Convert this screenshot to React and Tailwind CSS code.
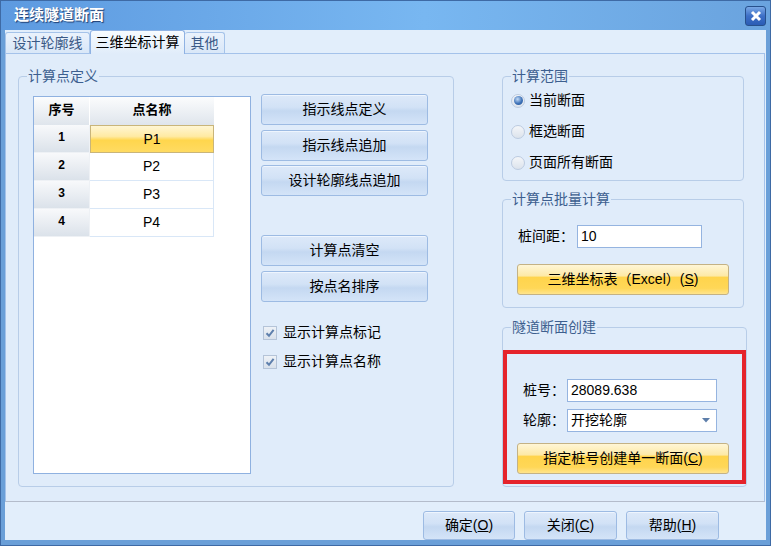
import React from 'react'

const blueBtn =
  'flex items-center justify-center rounded-[3px] border border-[#9dbbe3] bg-[linear-gradient(#dde9f9,#d2e2f6_42%,#c4d8f1_55%,#d4e4f8)] text-[14px] text-black shadow-[inset_0_1px_0_#eef5fe]'
const yellowBtn =
  'flex items-center justify-center rounded-[3px] border border-[#c4b285] bg-[linear-gradient(#fff6d6,#fde9a6_38%,#ffd44c_42%,#ffd757_80%,#ffe48c)] text-[14px] text-black'
const inputBox =
  'flex h-[23px] items-center border border-[#95b4e0] bg-white pl-[3px] text-[14px] text-black'

function Legend({ children }) {
  return (
    <legend className="ml-[8px] px-[1px] text-[14px] leading-[18px] text-[#3d5f8f]">{children}</legend>
  )
}

function Radio({ checked, label }) {
  return (
    <div className="flex h-[31px] items-center">
      <span className="flex h-[14px] w-[14px] items-center justify-center rounded-full border border-[#bccbe0] bg-[linear-gradient(#f4f6f9,#dce3ec)]">
        {checked && (
          <span className="h-[9px] w-[9px] rounded-full bg-[radial-gradient(circle_at_40%_35%,#c4dcf7,#3e72b8_55%,#22508f)]" />
        )}
      </span>
      <span className="ml-[4px] text-[14px] text-black">{label}</span>
    </div>
  )
}

function Check({ label, className }) {
  return (
    <div className={`flex h-[15px] items-center ${className}`}>
      <span className="ml-[2px] flex h-[14px] w-[14px] items-center justify-center border border-[#b5c4d8] bg-[linear-gradient(#eef2f7,#d9e1eb)]">
        <svg width="10" height="10" viewBox="0 0 10 10">
          <path d="M1.5 5.2 L4 7.8 L8.6 1.8" fill="none" stroke="#5f80ad" strokeWidth="2" />
        </svg>
      </span>
      <span className="ml-[6px] text-[14px] text-black">{label}</span>
    </div>
  )
}

export default function App() {
  const rows = ['P1', 'P2', 'P3', 'P4']

  return (
    <div className="flex h-[546px] w-[771px] flex-col border border-[#3e6aa5] bg-[#6a9fd8] font-['Liberation_Sans','Noto_Sans_CJK_SC',sans-serif]">
      {/* Title bar */}
      <div className="flex h-[29px] items-center justify-between bg-[linear-gradient(90deg,#5d9ae0,#78b7f1_55%,#6aa3de)] pl-[13px] pr-[4px]">
        <span className="text-[15px] font-bold text-white [text-shadow:1px_1px_1px_#1f3f73]">连续隧道断面</span>
        <span className="flex h-[20px] w-[21px] items-center justify-center rounded-[3px] border border-[#27508c] bg-[linear-gradient(#79a8e6,#3d6fc6_50%,#2b5cb5)]">
          <svg width="12" height="12" viewBox="0 0 12 12">
            <path d="M2 2 L10 10 M10 2 L2 10" stroke="white" strokeWidth="3" />
          </svg>
        </span>
      </div>

      {/* Client */}
      <div className="mx-[4px] mb-[5px] flex flex-1 flex-col bg-[#e2eefb]">
        {/* Tabs */}
        <div className="relative z-10 flex h-[23px] items-end">
          <div className="flex h-[21px] w-[85px] items-center justify-center rounded-t-[3px] border border-b-0 border-[#a5c3e9] bg-[linear-gradient(#eaf2fc,#d9e7f8)] text-[14px] text-[#3a5986]">
            设计轮廓线
          </div>
          <div className="-mb-px flex h-[24px] w-[95px] items-center justify-center rounded-t-[3px] border border-b-0 border-[#8fb2e3] bg-[linear-gradient(#f7fbff,#e0ecfa)] text-[14px] text-black">
            三维坐标计算
          </div>
          <div className="flex h-[21px] w-[40px] items-center justify-center rounded-t-[3px] border border-b-0 border-l-0 border-[#a5c3e9] bg-[linear-gradient(#eaf2fc,#d9e7f8)] text-[14px] text-[#3a5986]">
            其他
          </div>
        </div>

        {/* Tab panel */}
        <div className="flex h-[449px] w-[760px] border border-[#a4c2ea] border-b-[#b4bccb] bg-[#e0ecfa] pl-[12px] pt-[13px]">
          {/* 计算点定义 */}
          <fieldset className="h-[420px] w-[436px] rounded-[4px] border border-[#b8cde8]">
            <Legend>计算点定义</Legend>
            <div className="flex items-start pl-[14px]">
              {/* Grid */}
              <div className="mt-[11px] h-[378px] w-[218px] border border-[#8fb1e0] bg-white">
                <div className="flex h-[28px]">
                  <div className="flex w-[56px] items-center justify-center border-r border-white bg-[linear-gradient(#fbfcfd,#dfe5ec)] pb-[3px] text-[13px] font-bold text-black">
                    序号
                  </div>
                  <div className="flex w-[124px] items-center justify-center bg-[linear-gradient(#fbfcfd,#dfe5ec)] pb-[3px] text-[13px] font-bold text-black">
                    点名称
                  </div>
                </div>
                {rows.map((r, i) => (
                  <div key={r} className="flex h-[28px]">
                    <div className="flex w-[56px] justify-center border-r border-b border-[#eef1f5] bg-[linear-gradient(#f8f9fb,#dbe2ea)] pt-[5px] text-[12px] font-bold leading-[14px] text-black">
                      {i + 1}
                    </div>
                    {i === 0 ? (
                      <div className="flex w-[124px] items-center justify-center border border-[#c9b57a] bg-[linear-gradient(#fff6d3,#ffeaa3_40%,#ffd64d_55%,#ffdb62)] text-[14px] text-black">
                        {r}
                      </div>
                    ) : (
                      <div className="flex w-[124px] items-center justify-center border-r border-b border-[#d9e7f7] text-[14px] text-black">
                        {r}
                      </div>
                    )}
                  </div>
                ))}
              </div>

              {/* Buttons */}
              <div className="ml-[10px] mt-[9px] flex w-[167px] flex-col">
                <button className={`${blueBtn} h-[31px]`}>指示线点定义</button>
                <button className={`${blueBtn} mt-[5px] h-[31px]`}>指示线点追加</button>
                <button className={`${blueBtn} mt-[4px] h-[31px]`}>设计轮廓线点追加</button>
                <button className={`${blueBtn} mt-[39px] h-[31px]`}>计算点清空</button>
                <button className={`${blueBtn} mt-[5px] h-[31px]`}>按点名排序</button>
                <Check className="mt-[23px]" label="显示计算点标记" />
                <Check className="mt-[14px]" label="显示计算点名称" />
              </div>
            </div>
          </fieldset>

          {/* Right column */}
          <div className="ml-[48px] flex w-[242px] flex-col">
            <fieldset className="h-[114px] rounded-[4px] border border-[#b8cde8]">
              <Legend>计算范围</Legend>
              <div className="pl-[8px]">
                <Radio checked label="当前断面" />
                <Radio label="框选断面" />
                <Radio label="页面所有断面" />
              </div>
            </fieldset>

            <fieldset className="mt-[9px] h-[118px] rounded-[4px] border border-[#b8cde8]">
              <Legend>计算点批量计算</Legend>
              <div className="mt-[17px] flex items-center pl-[15px]">
                <span className="w-[59px] text-[14px] text-black">桩间距：</span>
                <div className={`${inputBox} w-[125px]`}>10</div>
              </div>
              <button className={`${yellowBtn} ml-[14px] mt-[16px] h-[31px] w-[212px]`}>
                三维坐标表（Excel）(<span className="underline">S</span>)
              </button>
            </fieldset>

            <fieldset className="mt-[10px] h-[169px] rounded-[4px] border border-[#b8cde8]">
              <Legend>隧道断面创建</Legend>
              <div className="mt-[14px] h-[134px] w-[243px] border-[4px] border-[#e5232b] pt-[25px]">
                <div className="flex items-center pl-[16px]">
                  <span className="w-[44px] text-[14px] text-black">桩号：</span>
                  <div className={`${inputBox} w-[150px]`}>28089.638</div>
                </div>
                <div className="mt-[7px] flex items-center pl-[16px]">
                  <span className="w-[44px] text-[14px] text-black">轮廓：</span>
                  <div className={`${inputBox} w-[150px] justify-between pr-[6px]`}>
                    <span>开挖轮廓</span>
                    <svg width="8" height="5" viewBox="0 0 8 5">
                      <path d="M0 0 H8 L4 4.5 Z" fill="#5d7eaa" />
                    </svg>
                  </div>
                </div>
                <button className={`${yellowBtn} ml-[10px] mt-[11px] h-[31px] w-[212px]`}>
                  指定桩号创建单一断面(<span className="underline">C</span>)
                </button>
              </div>
            </fieldset>
          </div>
        </div>

        {/* Bottom buttons */}
        <div className="flex flex-1 items-end justify-end gap-[9px] pr-[47px]">
          <button className={`${blueBtn} h-[29px] w-[92px]`}>
            确定(<span className="underline">O</span>)
          </button>
          <button className={`${blueBtn} h-[29px] w-[93px]`}>
            关闭(<span className="underline">C</span>)
          </button>
          <button className={`${blueBtn} h-[29px] w-[93px]`}>
            帮助(<span className="underline">H</span>)
          </button>
        </div>
      </div>
    </div>
  )
}
